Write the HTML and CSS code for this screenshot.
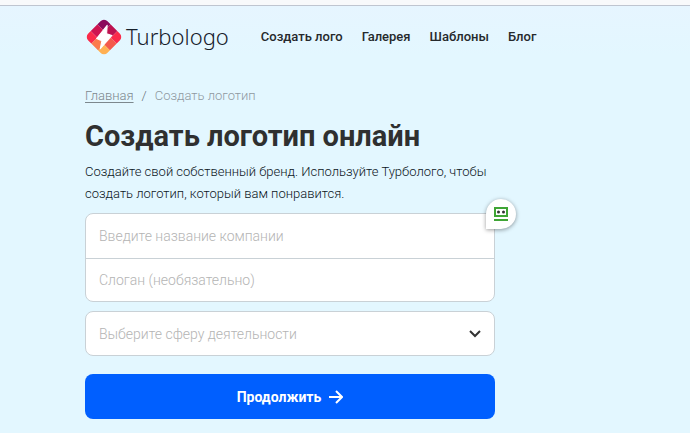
FILE: index.html
```
<!DOCTYPE html>
<html lang="ru">
<head>
    <meta charset="UTF-8">
    <meta name="viewport" content="width=device-width, initial-scale=1.0">
    <title>Создать логотип онлайн</title>
    <link rel="stylesheet" href="styles.css">
</head>
<body>
    <header class="header">
        <a class="logo" href="#">
            <svg class="logo-icon" viewBox="0 0 36 36" aria-hidden="true">
                <defs>
                    <clipPath id="logo-shape">
                        <rect x="5" y="5" width="26" height="26" rx="5" transform="rotate(45 18 18)"/>
                    </clipPath>
                </defs>
                <g clip-path="url(#logo-shape)">
                    <!-- сетка 3x3, повёрнутая на 45 градусов -->
                    <g transform="rotate(45 18 18)">
                        <rect x="5" y="5" width="9" height="9" fill="#8c0a5c"/>
                        <rect x="14" y="5" width="9" height="9" fill="#bd1250"/>
                        <rect x="23" y="5" width="8" height="9" fill="#fb2a4a"/>
                        <rect x="5" y="14" width="9" height="9" fill="#cf1450"/>
                        <rect x="14" y="14" width="9" height="9" fill="#f0404c"/>
                        <rect x="23" y="14" width="8" height="9" fill="#f4594b"/>
                        <rect x="5" y="23" width="9" height="8" fill="#fb2a4a"/>
                        <rect x="14" y="23" width="9" height="8" fill="#fb7a4c"/>
                        <rect x="23" y="23" width="8" height="8" fill="#ffb052"/>
                    </g>
                </g>
                <path d="M21 7L11 19.500l5 2L14.500 29 25.500 16.500 20.500 15z" fill="#fff" stroke="#fff" stroke-linejoin="round"/>
            </svg>
            <span class="logo-text">Turbologo</span>
        </a>
        <nav class="nav">
            <a href="#">Создать лого</a>
            <a href="#">Галерея</a>
            <a href="#">Шаблоны</a>
            <a href="#">Блог</a>
        </nav>
    </header>

    <main class="main">
        <nav class="breadcrumbs">
            <a href="#">Главная</a>
            <span class="separator">/</span>
            <span>Создать логотип</span>
        </nav>

        <h1>Создать логотип онлайн</h1>
        <p class="lead">Создайте свой собственный бренд. Используйте Турболого, чтобы создать логотип, который вам понравится.</p>

        <form class="form">
            <div class="fields">
                <input type="text" name="company" aria-label="Название компании" placeholder="Введите название компании">
                <input type="text" name="slogan" aria-label="Слоган" placeholder="Слоган (необязательно)">
                <div class="badge">
                    <svg viewBox="0 0 14 14" aria-hidden="true">
                        <rect x="1" y="1" width="12" height="8" fill="#fff" stroke="#3fa535" stroke-width="2"/>
                        <circle cx="4.500" cy="5" r="1.500" fill="#333"/>
                        <circle cx="9.500" cy="5" r="1.500" fill="#333"/>
                        <rect y="12" width="14" height="2" fill="#3fa535"/>
                    </svg>
                </div>
            </div>

            <div class="select">
                <select name="industry" aria-label="Сфера деятельности">
                    <option>Выберите сферу деятельности</option>
                </select>
                <svg class="chevron" viewBox="0 0 12 8" aria-hidden="true">
                    <path d="M1 1l5 5 5-5" fill="none" stroke="#333" stroke-width="2"/>
                </svg>
            </div>

            <button type="submit">
                Продолжить
                <svg viewBox="0 0 14 14" aria-hidden="true">
                    <path d="M0 7h13M7 1l6 6-6 6" fill="none" stroke="#fff" stroke-width="2"/>
                </svg>
            </button>
        </form>
    </main>
</body>
</html>
```
FILE: styles.css
```
* {
    box-sizing: border-box;
}

body {
    margin: 0;
    min-height: 100vh;
    border-top: 5px solid #f8f9fb;
    background: #e3f7ff;
    color: #2c3033;
    font-family: Roboto, "Liberation Sans", sans-serif;
    font-size: 13px;
}

.header {
    display: flex;
    align-items: center;
    gap: 32px;
    padding: 12px 85px 0;
    border-top: 1px solid #bfc5d0;
    background: linear-gradient(#e6f5ff, #e3f7ff);
}

.logo {
    display: flex;
    align-items: flex-start;
    gap: 3px;
    color: #16202b;
    text-decoration: none;
}

.logo-icon {
    width: 38px;
    height: 38px;
}

.logo-text {
    font-family: "Noto Sans", sans-serif;
    font-size: 22px;
    font-weight: 300;
    line-height: 36px;
}

.nav {
    display: flex;
    gap: 19px;
}

.nav a {
    color: #26292c;
    font-weight: 500;
    line-height: 16px;
    text-decoration: none;
}

.main {
    padding: 31px 85px 14px;
}

.breadcrumbs {
    display: flex;
    gap: 8px;
    color: #8f999f;
    font-weight: 300;
    line-height: 18px;
}

.breadcrumbs a {
    color: #7d888e;
    text-underline-offset: 2px;
}

.separator {
    color: #666f75;
}

h1 {
    margin: 13px 0 7px;
    color: #2f3030;
    font-size: 29px;
    font-weight: 700;
    line-height: 36px;
}

.lead {
    max-width: 410px;
    margin: 0 0 8px;
    color: #0c161d;
    font-weight: 300;
    line-height: 22px;
}

.form {
    max-width: 410px;
}

.fields {
    position: relative;
    border: 1px solid #c9d1d6;
    border-radius: 8px;
    background: #fff;
}

.fields input {
    display: block;
    width: 100%;
    height: 44px;
    padding: 0 13px;
    border: 0;
    border-radius: 8px;
    background: none;
    color: #26292c;
    font: 300 14px Roboto, "Liberation Sans", sans-serif;
}

.fields input + input {
    height: 43px;
    border-top: 1px solid #c9d1d6;
    border-radius: 0;
}

.fields input::placeholder {
    color: #b4b4b4;
    opacity: 1;
}

.badge {
    position: absolute;
    top: -15px;
    right: -22px;
    display: flex;
    align-items: center;
    justify-content: center;
    width: 30px;
    height: 30px;
    border-radius: 15px 15px 15px 0;
    background: #fff;
    box-shadow: 0 1px 4px rgba(0, 0, 0, 0.4);
}

.badge svg {
    width: 14px;
    height: 14px;
}

.select {
    position: relative;
    margin: 9px 0 18px;
}

.select select {
    display: block;
    width: 100%;
    height: 45px;
    padding: 0 13px;
    border: 1px solid #c9d1d6;
    border-radius: 8px;
    appearance: none;
    background: #fff;
    color: #b4b4b4;
    font: 300 14px Roboto, "Liberation Sans", sans-serif;
}

.chevron {
    position: absolute;
    top: 19px;
    right: 14px;
    width: 12px;
    height: 8px;
    pointer-events: none;
}

.form button {
    display: flex;
    align-items: center;
    justify-content: center;
    gap: 8px;
    width: 100%;
    height: 45px;
    border: 0;
    border-radius: 8px;
    background: #005fff;
    color: #fff;
    font: 700 14px Roboto, "Liberation Sans", sans-serif;
    cursor: pointer;
}

.form button svg {
    width: 14px;
    height: 14px;
}
```
